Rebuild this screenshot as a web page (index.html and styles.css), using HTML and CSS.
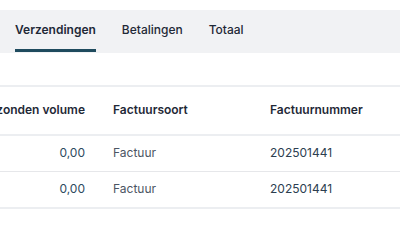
FILE: index.html
```html
<!DOCTYPE html>
<html lang="nl">
<head>
<meta charset="utf-8">
<link rel="stylesheet" href="styles.css">
</head>
<body>
<div class="page">
  <nav class="tabs">
    <span class="tab active">Verzendingen</span>
    <span class="tab">Betalingen</span>
    <span class="tab">Totaal</span>
  </nav>
  <div class="table">
    <div class="row head">
      <div class="cell num"><span>Verzonden volume</span></div>
      <div class="cell">Factuursoort</div>
      <div class="cell">Factuurnummer</div>
    </div>
    <div class="row">
      <div class="cell num"><span>0,00</span></div>
      <div class="cell type">Factuur</div>
      <div class="cell id">202501441</div>
    </div>
    <div class="row last">
      <div class="cell num"><span>0,00</span></div>
      <div class="cell type">Factuur</div>
      <div class="cell id">202501441</div>
    </div>
  </div>
</div>
</body>
</html>
```
FILE: styles.css
```css
html, body {
  margin: 0;
  padding: 0;
  background: #ffffff;
  overflow: hidden;
}
body {
  font-family: Inter, "Noto Sans", sans-serif;
  font-size: 12px;
  line-height: 16px;
  color: #1f2937;
}
.page {
  padding-top: 10px;
}
.tabs {
  display: flex;
  gap: 26px;
  background: #f1f2f4;
  padding: 0 15px 1px;
}
.tab {
  padding: 12px 0 11px;
  border-bottom: 3px solid transparent;
  font-weight: 500;
  color: #1f2937;
}
.tab.active {
  font-weight: 600;
  border-bottom-color: #1f4b5e;
}
.table {
  margin-top: 32px;
  border-top: 2px solid #eceef1;
}
.row {
  display: grid;
  grid-template-columns: 99px 157px 1fr;
  border-bottom: 1px solid #e6e7ea;
}
.row.head {
  border-bottom: 2px solid #eceef1;
}
.row.last {
  border-bottom: 2px solid #eceef1;
}
.cell {
  padding: 9px 14px 10px;
  white-space: nowrap;
}
.head .cell {
  padding: 15px 14px 16px;
  font-weight: 600;
  color: #1f2937;
}
.cell.num {
  display: flex;
  justify-content: flex-end;
  color: #2d4a5e;
}
.head .cell.num {
  color: #1f2937;
}
.cell.type {
  color: #4b5563;
}
.cell.id {
  color: #2c3e50;
}
```
